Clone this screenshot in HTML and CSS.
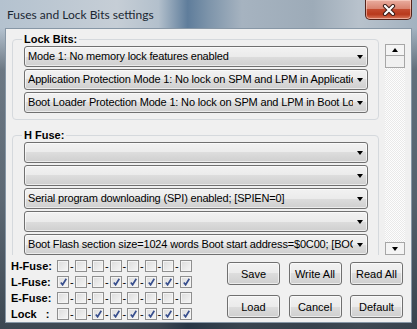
FILE: index.html
```html
<!DOCTYPE html>
<html>
<head>
<meta charset="utf-8">
<link rel="stylesheet" href="styles.css">
</head>
<body>
<div class="window">
  <div class="titlebar">
    <span class="title">Fuses and Lock Bits settings</span>
    <div class="close">
      <svg width="14" height="12" viewBox="0 0 14 12">
        <path d="M3 2 L11 10 M11 2 L3 10" stroke="#3a1d18" stroke-width="4.2" stroke-linecap="round"/>
        <path d="M3 2 L11 10 M11 2 L3 10" stroke="#ffffff" stroke-width="2.2" stroke-linecap="round"/>
      </svg>
    </div>
  </div>
  <div class="client">
    <div class="scrollrow">
      <div class="viewport">
        <fieldset class="group">
          <legend>Lock Bits:</legend>
          <div class="combo"><span class="ctext">Mode 1: No memory lock features enabled</span><i class="arrow"></i></div>
          <div class="combo"><span class="ctext">Application Protection Mode 1: No lock on SPM and LPM in Application Section</span><i class="arrow"></i></div>
          <div class="combo"><span class="ctext">Boot Loader Protection Mode 1: No lock on SPM and LPM in Boot Loader Section</span><i class="arrow"></i></div>
        </fieldset>
        <fieldset class="group">
          <legend>H Fuse:</legend>
          <div class="combo"><span class="ctext"></span><i class="arrow"></i></div>
          <div class="combo"><span class="ctext"></span><i class="arrow"></i></div>
          <div class="combo"><span class="ctext">Serial program downloading (SPI) enabled; [SPIEN=0]</span><i class="arrow"></i></div>
          <div class="combo"><span class="ctext"></span><i class="arrow"></i></div>
          <div class="combo"><span class="ctext">Boot Flash section size=1024 words Boot start address=$0C00; [BOOTSZ=00]</span><i class="arrow"></i></div>
        </fieldset>
      </div>
      <div class="vscroll">
        <div class="sbtn"><i class="tri-up"></i></div>
        <div class="thumb"></div>
        <div class="track"></div>
        <div class="sbtn"><i class="arrow"></i></div>
      </div>
    </div>
    <div class="bottom">
      <div class="bits">
        <div class="bitrow"><span class="blabel">H-Fuse:</span>
          <span class="cb"></span><span class="dash">-</span><span class="cb"></span><span class="dash">-</span><span class="cb"></span><span class="dash">-</span><span class="cb"></span><span class="dash">-</span><span class="cb"></span><span class="dash">-</span><span class="cb"></span><span class="dash">-</span><span class="cb"></span><span class="dash">-</span><span class="cb"></span>
        </div>
        <div class="bitrow"><span class="blabel">L-Fuse:</span>
          <span class="cb on"></span><span class="dash">-</span><span class="cb"></span><span class="dash">-</span><span class="cb"></span><span class="dash">-</span><span class="cb on"></span><span class="dash">-</span><span class="cb on"></span><span class="dash">-</span><span class="cb on"></span><span class="dash">-</span><span class="cb on"></span><span class="dash">-</span><span class="cb on"></span>
        </div>
        <div class="bitrow"><span class="blabel">E-Fuse:</span>
          <span class="cb"></span><span class="dash">-</span><span class="cb"></span><span class="dash">-</span><span class="cb"></span><span class="dash">-</span><span class="cb"></span><span class="dash">-</span><span class="cb"></span><span class="dash">-</span><span class="cb"></span><span class="dash">-</span><span class="cb"></span><span class="dash">-</span><span class="cb"></span>
        </div>
        <div class="bitrow"><span class="blabel">Lock&nbsp;&nbsp;&nbsp;:</span>
          <span class="cb"></span><span class="dash">-</span><span class="cb"></span><span class="dash">-</span><span class="cb on"></span><span class="dash">-</span><span class="cb on"></span><span class="dash">-</span><span class="cb on"></span><span class="dash">-</span><span class="cb on"></span><span class="dash">-</span><span class="cb on"></span><span class="dash">-</span><span class="cb on"></span>
        </div>
      </div>
      <div class="buttons">
        <div class="btn">Save</div>
        <div class="btn">Write All</div>
        <div class="btn">Read All</div>
        <div class="btn">Load</div>
        <div class="btn">Cancel</div>
        <div class="btn">Default</div>
      </div>
    </div>
  </div>
</div>
</body>
</html>
```
FILE: styles.css
```css
* { box-sizing: border-box; }
html, body { margin: 0; padding: 0; }
body {
  width: 417px;
  height: 329px;
  overflow: hidden;
  font-family: "Liberation Sans", Arial, sans-serif;
  font-size: 11px;
  color: #000;
  background:
    linear-gradient(180deg, rgba(20,30,40,0) 0px, rgba(20,30,40,0) 28px, rgba(20,30,40,0.45) 70px, rgba(20,30,40,0.55) 200px, rgba(20,30,40,0.75) 329px),
    linear-gradient(90deg, #b4c2cf 0%, #c6ced6 28%, #b3c0cc 38%, #5f7d9b 45%, #7d94aa 50%, #a6b3c0 58%, #9dabb8 75%, #b8c2cc 86%, #a3b2c0 100%);
}
.window {
  display: flex;
  flex-direction: column;
  height: 329px;
}
.titlebar {
  height: 29px;
  display: flex;
  align-items: flex-start;
  justify-content: space-between;
  padding: 0 5px 0 7px;
}
.title {
  font-family: Lato, "Liberation Sans", sans-serif;
  font-size: 12px;
  margin-top: 7px;
  color: #1b2733;
}
.close {
  width: 47px;
  height: 20px;
  border: 1px solid #53231a;
  border-top: none;
  border-radius: 0 0 5px 5px;
  background: linear-gradient(180deg, #e9ad9f 0%, #d98470 45%, #c34a2e 50%, #b8391c 75%, #d8775b 100%);
  box-shadow: inset 0 0 0 1px rgba(255,220,210,0.55);
  display: flex;
  align-items: center;
  justify-content: center;
}
.client {
  margin: 0 6px;
  height: 293px;
  background: #f0f0f0;
  display: flex;
  flex-direction: column;
  box-shadow: 0 0 0 1px #8797a6;
}
.scrollrow {
  display: flex;
  height: 226px;
  padding: 4px 6px 0 6px;
  gap: 6px;
}
.viewport {
  width: 367px;
  flex: none;
  overflow: hidden;
}
.group {
  margin: 0;
  min-width: 0;
  padding: 0 10px 6px 11px;
  border: 1px solid #d5d9dd;
  border-radius: 4px;
  display: flex;
  flex-direction: column;
  gap: 2px;
}
.group + .group { margin-top: 9px; }
.group legend {
  font-weight: bold;
  line-height: 13px;
  padding: 0 2px;
  margin-left: -2px;
}
.combo {
  height: 21px;
  flex: none;
  border: 1px solid #707070;
  border-radius: 3px;
  background: linear-gradient(180deg, #f2f2f2 0%, #ebebeb 50%, #dddddd 50%, #cfcfcf 100%);
  box-shadow: inset 0 0 0 1px rgba(255,255,255,0.6);
  display: flex;
  align-items: center;
  padding: 0 3px 0 3px;
}
.ctext {
  flex: 1;
  min-width: 0;
  overflow: hidden;
  white-space: nowrap;
  line-height: 13px;
  letter-spacing: -0.17px;
}
.arrow {
  width: 0;
  height: 0;
  border-left: 3.5px solid transparent;
  border-right: 3.5px solid transparent;
  border-top: 4px solid #000;
  margin-left: 4px;
  margin-right: 1px;
}
.tri-up {
  width: 0;
  height: 0;
  border-left: 3.5px solid transparent;
  border-right: 3.5px solid transparent;
  border-bottom: 4px solid #000;
}
.vscroll {
  width: 20px;
  margin-top: 11px;
  display: flex;
  flex-direction: column;
}
.sbtn {
  height: 12px;
  flex: none;
  border: 1px solid #a6a6a6;
  background: #f4f4f4;
  display: flex;
  align-items: center;
  justify-content: center;
}
.sbtn .arrow { margin: 0; }
.sbtn:last-child { height: 13px; }
.thumb {
  height: 12px;
  flex: none;
  border: 1px solid #a6a6a6;
  border-top: none;
  background: #f0f0f0;
}
.track {
  flex: 1;
  background-color: #f6f6f6;
  background-image: repeating-conic-gradient(#e9e9e9 0 25%, #fdfdfd 0 50%);
  background-size: 2px 2px;
}
.bottom {
  flex: 1;
  display: flex;
  padding: 0 8px 0 5px;
}
.bits {
  padding-top: 3px;
  display: flex;
  flex-direction: column;
}
.bitrow {
  height: 16px;
  display: flex;
  align-items: center;
}
.blabel {
  width: 46px;
  font-weight: bold;
  white-space: nowrap;
}
.cb {
  width: 12px;
  height: 12px;
  border: 1px solid #8f8f8f;
  background: linear-gradient(135deg, #dcdcdc 0%, #f6f6f6 100%);
  box-shadow: inset 0 0 0 1px #f4f4f4;
  position: relative;
}
.cb.on::after {
  content: "";
  position: absolute;
  left: 2px;
  top: 1px;
  width: 7px;
  height: 8px;
  background: no-repeat center/100% url("data:image/svg+xml;utf8,<svg xmlns='http://www.w3.org/2000/svg' viewBox='0 0 7 8'><path d='M0.8 4.5 L2.6 6.8 L6.3 0.8' fill='none' stroke='%23384f8e' stroke-width='1.7'/></svg>");
}
.dash {
  width: 5.5px;
  text-align: center;
  font-size: 11px;
  line-height: 11px;
}
.buttons {
  margin-left: auto;
  margin-top: 7px;
  display: grid;
  grid-template-columns: repeat(3, 53px);
  grid-template-rows: 23px 23px;
  column-gap: 8.5px;
  row-gap: 10px;
  align-self: flex-start;
}
.btn {
  border: 1px solid #707070;
  border-radius: 3px;
  background: linear-gradient(180deg, #f2f2f2 0%, #ebebeb 50%, #dddddd 50%, #cfcfcf 100%);
  box-shadow: inset 0 0 0 1px rgba(255,255,255,0.6);
  display: flex;
  align-items: center;
  justify-content: center;
}
```
